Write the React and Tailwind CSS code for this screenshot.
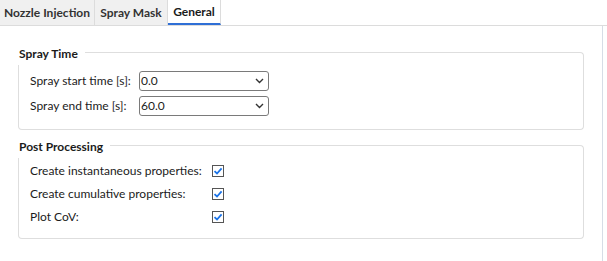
import React from "react";

const font = { fontFamily: 'Lato, "Noto Sans", sans-serif' };

function Chevron() {
  return (
    <svg width="9" height="6" viewBox="0 0 9 6" className="mr-[4px]">
      <path d="M1 1 L4.5 4.5 L8 1" fill="none" stroke="#333" strokeWidth="1.4" />
    </svg>
  );
}

function Select({ value }) {
  return (
    <div className="flex h-[20px] w-[130px] shrink-0 items-center justify-between rounded-[3px] border border-[#7a7a7a] bg-white pl-[1px] text-[12px] text-[#1b1b1b]">
      <span className="leading-[18px]">{value}</span>
      <Chevron />
    </div>
  );
}

function Check() {
  return (
    <div className="flex h-[12px] w-[12px] shrink-0 items-center justify-center border border-[#555] bg-white">
      <svg width="10" height="10" viewBox="0 0 10 10">
        <path d="M1.5 5.2 L4 7.5 L8.6 2.4" fill="none" stroke="#1a73e8" strokeWidth="1.8" />
      </svg>
    </div>
  );
}

function Group({ title, children, bodyClass }) {
  return (
    <div>
      <div className="flex h-[19px] items-start">
        <span className="ml-[1px] whitespace-nowrap pr-[7px] text-[12px] font-bold leading-[16px] text-[#1b1b1b]">{title}</span>
        <div className="mt-[6px] h-[13px] flex-1 rounded-tr-[4px] border-t border-r border-[#dedede]" />
      </div>
      <div className={"rounded-b-[4px] border-x border-b border-[#dedede] " + bodyClass}>{children}</div>
    </div>
  );
}

export default function App() {
  return (
    <div className="h-[261px] w-[607px] overflow-hidden bg-white" style={font}>
      <div className="flex h-[26px] border-b border-[#dcdcdc]">
        <div className="flex h-full w-[95px] items-center justify-center whitespace-nowrap border-r border-[#dcdcdc] bg-[#f0f0f0] text-[12px] font-bold text-[#333]">
          Nozzle Injection
        </div>
        <div className="flex h-full w-[73px] items-center justify-center whitespace-nowrap border-r border-[#dcdcdc] bg-[#f0f0f0] text-[12px] font-bold text-[#333]">
          Spray Mask
        </div>
        <div className="flex h-full w-[53px] items-center justify-center whitespace-nowrap border-b-2 border-r border-b-[#2f6fd6] border-r-[#dcdcdc] bg-white pt-[1px] text-[12px] font-bold text-[#1b1b1b]">
          General
        </div>
      </div>
      <div className="mr-[4px] h-[235px] border-r border-[#d6dde6] px-[18px] pt-[20px]">
        <Group title="Spray Time" bodyClass="pt-[6px] pb-[13px] pl-[11px]">
          <div className="flex flex-col gap-[5px]">
            <div className="flex h-[20px] items-center">
              <span className="w-[109px] shrink-0 whitespace-nowrap text-[12px] text-[#1b1b1b]">Spray start time [s]:</span>
              <Select value="0.0" />
            </div>
            <div className="flex h-[20px] items-center">
              <span className="w-[109px] shrink-0 whitespace-nowrap text-[12px] text-[#1b1b1b]">Spray end time [s]:</span>
              <Select value="60.0" />
            </div>
          </div>
        </Group>
        <div className="h-[9px]" />
        <Group title="Post Processing" bodyClass="pt-[3px] pb-[11px] pl-[11px]">
          <div className="flex flex-col gap-[3px]">
            {["Create instantaneous properties:", "Create cumulative properties:", "Plot CoV:"].map((t) => (
              <div key={t} className="flex h-[20px] items-center">
                <span className="w-[182px] shrink-0 whitespace-nowrap text-[12px] text-[#1b1b1b]">{t}</span>
                <Check />
              </div>
            ))}
          </div>
        </Group>
      </div>
    </div>
  );
}
